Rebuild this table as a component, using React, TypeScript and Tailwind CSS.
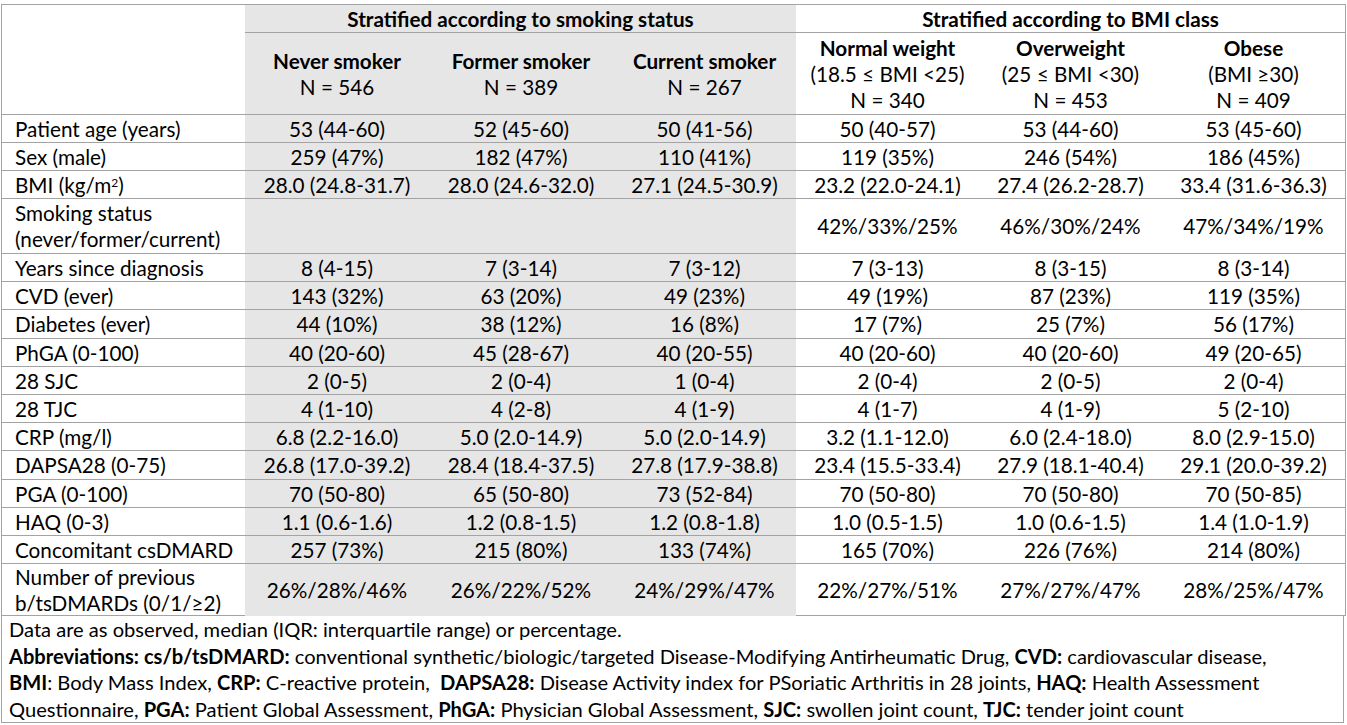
import type { ReactNode } from "react";

type Row = {
  label: ReactNode;
  vals: string[];
  h: string;
};

const rows: Row[] = [
  { label: "Patient age (years)", vals: ["53 (44-60)", "52 (45-60)", "50 (41-56)", "50 (40-57)", "53 (44-60)", "53 (45-60)"], h: "h-[28px]" },
  { label: "Sex (male)", vals: ["259 (47%)", "182 (47%)", "110 (41%)", "119 (35%)", "246 (54%)", "186 (45%)"], h: "h-[28px]" },
  {
    label: (
      <>
        BMI (kg/m<sup className="text-[12px]">2</sup>)
      </>
    ),
    vals: ["28.0 (24.8-31.7)", "28.0 (24.6-32.0)", "27.1 (24.5-30.9)", "23.2 (22.0-24.1)", "27.4 (26.2-28.7)", "33.4 (31.6-36.3)"],
    h: "h-[28px]",
  },
  {
    label: (
      <>
        Smoking status
        <br />
        (never/former/current)
      </>
    ),
    vals: ["", "", "", "42%/33%/25%", "46%/30%/24%", "47%/34%/19%"],
    h: "h-[55px]",
  },
  { label: "Years since diagnosis", vals: ["8 (4-15)", "7 (3-14)", "7 (3-12)", "7 (3-13)", "8 (3-15)", "8 (3-14)"], h: "h-[28px]" },
  { label: "CVD (ever)", vals: ["143 (32%)", "63 (20%)", "49 (23%)", "49 (19%)", "87 (23%)", "119 (35%)"], h: "h-[28px]" },
  { label: "Diabetes (ever)", vals: ["44 (10%)", "38 (12%)", "16 (8%)", "17 (7%)", "25 (7%)", "56 (17%)"], h: "h-[29px]" },
  { label: "PhGA (0-100)", vals: ["40 (20-60)", "45 (28-67)", "40 (20-55)", "40 (20-60)", "40 (20-60)", "49 (20-65)"], h: "h-[28px]" },
  { label: "28 SJC", vals: ["2 (0-5)", "2 (0-4)", "1 (0-4)", "2 (0-4)", "2 (0-5)", "2 (0-4)"], h: "h-[28px]" },
  { label: "28 TJC", vals: ["4 (1-10)", "4 (2-8)", "4 (1-9)", "4 (1-7)", "4 (1-9)", "5 (2-10)"], h: "h-[28px]" },
  { label: "CRP (mg/l)", vals: ["6.8 (2.2-16.0)", "5.0 (2.0-14.9)", "5.0 (2.0-14.9)", "3.2 (1.1-12.0)", "6.0 (2.4-18.0)", "8.0 (2.9-15.0)"], h: "h-[28px]" },
  { label: "DAPSA28 (0-75)", vals: ["26.8 (17.0-39.2)", "28.4 (18.4-37.5)", "27.8 (17.9-38.8)", "23.4 (15.5-33.4)", "27.9 (18.1-40.4)", "29.1 (20.0-39.2)"], h: "h-[29px]" },
  { label: "PGA (0-100)", vals: ["70 (50-80)", "65 (50-80)", "73 (52-84)", "70 (50-80)", "70 (50-80)", "70 (50-85)"], h: "h-[28px]" },
  { label: "HAQ (0-3)", vals: ["1.1 (0.6-1.6)", "1.2 (0.8-1.5)", "1.2 (0.8-1.8)", "1.0 (0.5-1.5)", "1.0 (0.6-1.5)", "1.4 (1.0-1.9)"], h: "h-[28px]" },
  { label: "Concomitant csDMARD", vals: ["257 (73%)", "215 (80%)", "133 (74%)", "165 (70%)", "226 (76%)", "214 (80%)"], h: "h-[28px]" },
  {
    label: (
      <>
        Number of previous
        <br />
        b/tsDMARDs (0/1/≥2)
      </>
    ),
    vals: ["26%/28%/46%", "26%/22%/52%", "24%/29%/47%", "22%/27%/51%", "27%/27%/47%", "28%/25%/47%"],
    h: "h-[51px]",
  },
];

const groups = [
  { name: "Never smoker", lines: ["N = 546"] },
  { name: "Former smoker", lines: ["N = 389"] },
  { name: "Current smoker", lines: ["N = 267"] },
  { name: "Normal weight", lines: ["(18.5 ≤ BMI <25)", "N = 340"] },
  { name: "Overweight", lines: ["(25 ≤ BMI <30)", "N = 453"] },
  { name: "Obese", lines: ["(BMI ≥30)", "N = 409"] },
];

const cols = "grid grid-cols-[243px_184px_184px_183px_183px_183px_183px]";

function B({ children }: { children: ReactNode }) {
  return <span className="font-bold">{children}</span>;
}

export default function App() {
  return (
    <div className="min-h-screen bg-white pl-[1px] pt-[4px] font-['Lato','Liberation_Sans',sans-serif] text-[20.7px] leading-[26px] text-black">
      <div className="w-[1345px] border border-[#a3a3a3]">
        {/* header */}
        <div className={`${cols} grid-rows-[28px_81px] border-b border-[#a3a3a3]`}>
          <div className="row-span-2" />
          <div className="col-span-3 flex items-center justify-center border-b border-[#a3a3a3] bg-[#e7e6e6] font-bold">
            Stratified according to smoking status
          </div>
          <div className="col-span-3 flex items-center justify-center border-b border-[#a3a3a3] font-bold">
            Stratified according to BMI class
          </div>
          {groups.map((g, i) => (
            <div
              key={g.name}
              className={`flex flex-col items-center justify-center text-center ${i < 3 ? "bg-[#e7e6e6]" : ""}`}
            >
              <div className="font-bold">{g.name}</div>
              {g.lines.map((l) => (
                <div key={l}>{l}</div>
              ))}
            </div>
          ))}
        </div>

        {/* body */}
        {rows.map((r, ri) => (
          <div
            key={ri}
            className={`${cols} ${r.h} ${ri < rows.length - 1 ? "border-b border-[#a3a3a3]" : ""}`}
          >
            <div className="flex items-center whitespace-nowrap pl-[13px]">
              <div>{r.label}</div>
            </div>
            {r.vals.map((v, i) => (
              <div
                key={i}
                className={`flex items-center justify-center whitespace-nowrap ${i < 3 ? "bg-[#e7e6e6]" : ""}`}
              >
                {v}
              </div>
            ))}
          </div>
        ))}
      </div>

      {/* notes */}
      <div className="h-[107px] w-[1343px] whitespace-nowrap border-x border-b border-[#a3a3a3] pl-[7px] text-[20.1px] leading-[26.5px]">
        <div>Data are as observed, median (IQR: interquartile range) or percentage.</div>
        <div>
          <B>Abbreviations: cs/b/tsDMARD:</B> conventional synthetic/biologic/targeted Disease-Modifying
          Antirheumatic Drug, <B>CVD:</B> cardiovascular disease,
        </div>
        <div>
          <B>BMI</B>: Body Mass Index, <B>CRP:</B> C-reactive protein,&nbsp; <B>DAPSA28:</B> Disease Activity
          index for PSoriatic Arthritis in 28 joints, <B>HAQ:</B> Health Assessment
        </div>
        <div>
          Questionnaire, <B>PGA:</B> Patient Global Assessment, <B>PhGA:</B> Physician Global Assessment,{" "}
          <B>SJC:</B> swollen joint count, <B>TJC:</B> tender joint count
        </div>
      </div>
    </div>
  );
}
